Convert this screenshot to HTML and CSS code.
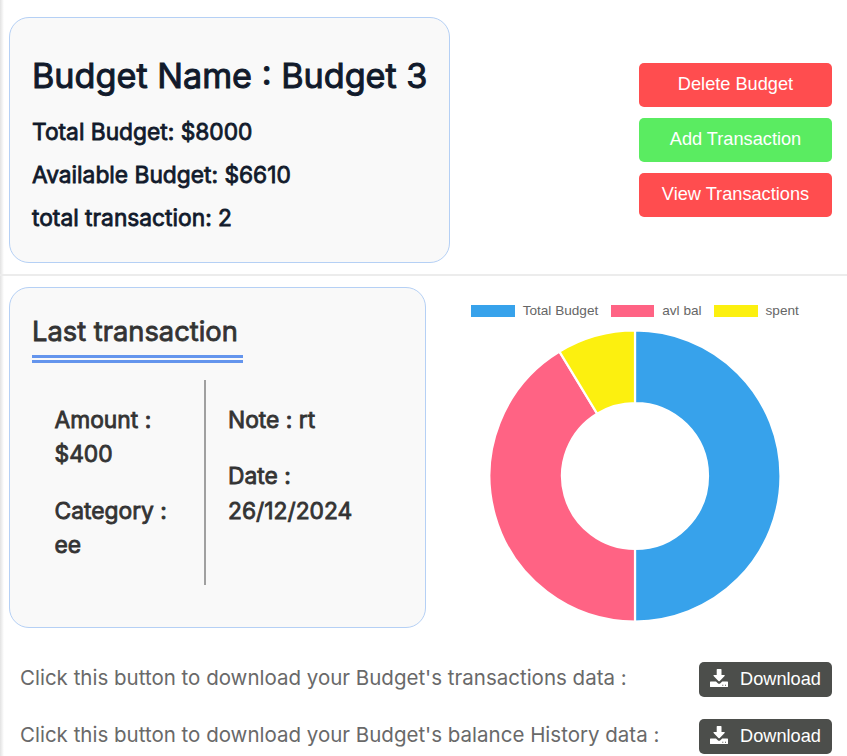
FILE: index.html
```html
<!DOCTYPE html>
<html lang="en">
<head>
<meta charset="utf-8">
<title>Budget 3</title>
<link rel="stylesheet" href="styles.css">
</head>
<body>
<main class="page">
  <section class="overview">
    <div class="card summary">
      <h1>Budget Name : Budget 3</h1>
      <p>Total Budget: $8000</p>
      <p>Available Budget: $6610</p>
      <p>total transaction: 2</p>
    </div>
    <div class="actions">
      <button class="btn red">Delete Budget</button>
      <button class="btn green">Add Transaction</button>
      <button class="btn red">View Transactions</button>
    </div>
  </section>
  <section class="details">
    <div class="card last">
      <h2>Last transaction</h2>
      <div class="fields">
        <div class="col col-left">
          <p>Amount :<br>$400</p>
          <p>Category :<br>ee</p>
        </div>
        <div class="col col-right">
          <p>Note : rt</p>
          <p>Date :<br>26/12/2024</p>
        </div>
      </div>
    </div>
    <div class="chart">
      <ul class="legend">
        <li><i class="blue"></i>Total Budget</li>
        <li><i class="pink"></i>avl bal</li>
        <li><i class="yellow"></i>spent</li>
      </ul>
      <svg class="doughnut" viewBox="-146 -146 292 292" width="292" height="292">
        <g stroke="#fff" stroke-width="2.2" stroke-linejoin="bevel">
          <path fill="#37a2eb" d="M0-145.5A145.5 145.5 0 0 1 0 145.5V73A73 73 0 0 0 0-73Z"/>
          <path fill="#ff6384" d="M0 145.5A145.5 145.5 0 0 1-75.52-124.37L-37.89-62.4A73 73 0 0 0 0 73Z"/>
          <path fill="#fcf00f" d="M-75.52-124.37A145.5 145.5 0 0 1 0-145.5V-73A73 73 0 0 0-37.89-62.4Z"/>
        </g>
      </svg>
    </div>
  </section>
  <section class="downloads">
    <div class="row">
      <p>Click this button to download your Budget's transactions data :</p>
      <button class="dl"><svg viewBox="0 0 18 18" width="18" height="18"><path fill="#fff" fill-rule="evenodd" d="M7.3 0h3.6q.6 0 .6.6V6h2.7q1 0 .4.9L9.8 11.9q-.7.6-1.4 0L3.6 6.9q-.6-.9.4-.9h2.7V.6q0-.6.6-.6zM.6 12.5H6l1.8 1.7q1.3 1 2.6 0l1.8-1.7h5.2q.6 0 .6.6v4.3q0 .6-.6.6H.6q-.6 0-.6-.6v-4.3q0-.6.6-.6zM12.3 15.7v1h1v-1zm2.7 0v1h1v-1z"/></svg><span>Download</span></button>
    </div>
    <div class="row">
      <p>Click this button to download your Budget's balance History data :</p>
      <button class="dl"><svg viewBox="0 0 18 18" width="18" height="18"><path fill="#fff" fill-rule="evenodd" d="M7.3 0h3.6q.6 0 .6.6V6h2.7q1 0 .4.9L9.8 11.9q-.7.6-1.4 0L3.6 6.9q-.6-.9.4-.9h2.7V.6q0-.6.6-.6zM.6 12.5H6l1.8 1.7q1.3 1 2.6 0l1.8-1.7h5.2q.6 0 .6.6v4.3q0 .6-.6.6H.6q-.6 0-.6-.6v-4.3q0-.6.6-.6zM12.3 15.7v1h1v-1zm2.7 0v1h1v-1z"/></svg><span>Download</span></button>
    </div>
  </section>
</main>
</body>
</html>
```
FILE: styles.css
```css
* { box-sizing: border-box; }
body { margin: 0; background: #fff; font-family: Inter, sans-serif; overflow: hidden; }
h1, h2, p, ul { margin: 0; padding: 0; font-weight: 400; }
.page { height: 756px; background: linear-gradient(90deg, #e2e2e2, #fff 4px); }
.overview { display: flex; justify-content: space-between; height: 276px; padding: 17px 15px 0 9px; border-bottom: 2px solid #ececec; }
.card { background: #f9f9f9; border: 1.5px solid #b5d0f5; border-radius: 20px; }
.summary { width: 441px; height: 246px; padding: 36px 0 0 22px; color: #111a2b; white-space: nowrap; -webkit-text-stroke: 0.8px #111a2b; }
.summary h1 { font-size: 34.2px; line-height: 44px; margin-bottom: 12px; -webkit-text-stroke-width: 1px; }
.summary p { font-size: 22.75px; line-height: 43px; }
.actions { width: 193px; padding-top: 46px; display: flex; flex-direction: column; gap: 11.5px; }
button { border: 0; padding: 0; margin: 0; color: #fff; font-family: "Liberation Sans", Arial, sans-serif; font-size: 18.2px; }
.btn { width: 193px; height: 43.5px; border-radius: 5px; }
.red { background: #ff4d4f; }
.green { background: #5aec61; }
.details { display: flex; padding: 11px 0 0 9px; height: 352px; }
.last { width: 417px; height: 341px; padding: 20px 22px; color: #333; -webkit-text-stroke: 0.8px #333; }
.last h2 { width: 211px; height: 55px; font-size: 27.3px; line-height: 47px; border-bottom: 8px double #6495ed; white-space: nowrap; }
.fields { display: flex; margin-top: 17px; height: 205px; font-size: 22.8px; line-height: 34.4px; white-space: nowrap; }
.col { padding-top: 23px; }
.col p { margin-bottom: 22px; }
.col-left { width: 174px; padding-left: 22.5px; border-right: 2px solid #a0a0a0; }
.col-right { padding-left: 22px; }
.chart { width: 418px; padding-top: 16px; display: flex; flex-direction: column; align-items: center; }
.legend { display: flex; gap: 12.5px; list-style: none; height: 15px; font: 13.6px/15px "Liberation Sans", Arial, sans-serif; color: #666; }
.legend li { display: flex; align-items: center; gap: 8px; white-space: nowrap; }
.legend i { width: 43.5px; height: 12px; }
.blue { background: #37a2eb; }
.pink { background: #ff6384; }
.yellow { background: #fcf00f; }
.doughnut { margin: 11.5px 0 0 -1px; }
.downloads { padding: 34px 15px 0 20px; }
.row { display: flex; justify-content: space-between; align-items: center; height: 35px; margin-bottom: 22px; color: #696969; font-size: 20.5px; white-space: nowrap; }
.row p { padding-bottom: 4px; }
.dl { width: 133px; height: 35px; border-radius: 5px; background: #4c4e4b; display: flex; align-items: center; padding-left: 11px; gap: 12px; }
.dl svg { margin-bottom: 3px; }
```
